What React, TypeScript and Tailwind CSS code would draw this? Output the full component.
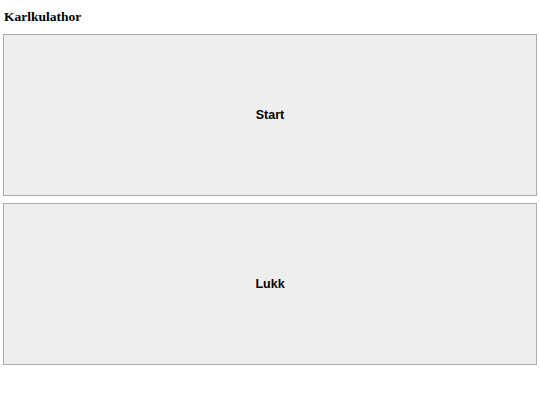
export default function App() {
  return (
    <div className="flex flex-col px-[3px] pt-[9px]">
      <h5 className="pl-[1px] font-['Liberation_Serif',serif] text-[13.5px] font-bold leading-[16px] text-black">
        Karlkulathor
      </h5>
      <div className="mt-[9px] flex flex-col gap-[7px]">
        <button className="h-[162px] w-full border border-[#aaaaaa] bg-[#eeeeee] font-['Liberation_Sans',Arial,sans-serif] text-[12.5px] font-bold text-black">
          Start
        </button>
        <button className="h-[162px] w-full border border-[#aaaaaa] bg-[#eeeeee] font-['Liberation_Sans',Arial,sans-serif] text-[12.5px] font-bold text-black">
          Lukk
        </button>
      </div>
    </div>
  );
}
